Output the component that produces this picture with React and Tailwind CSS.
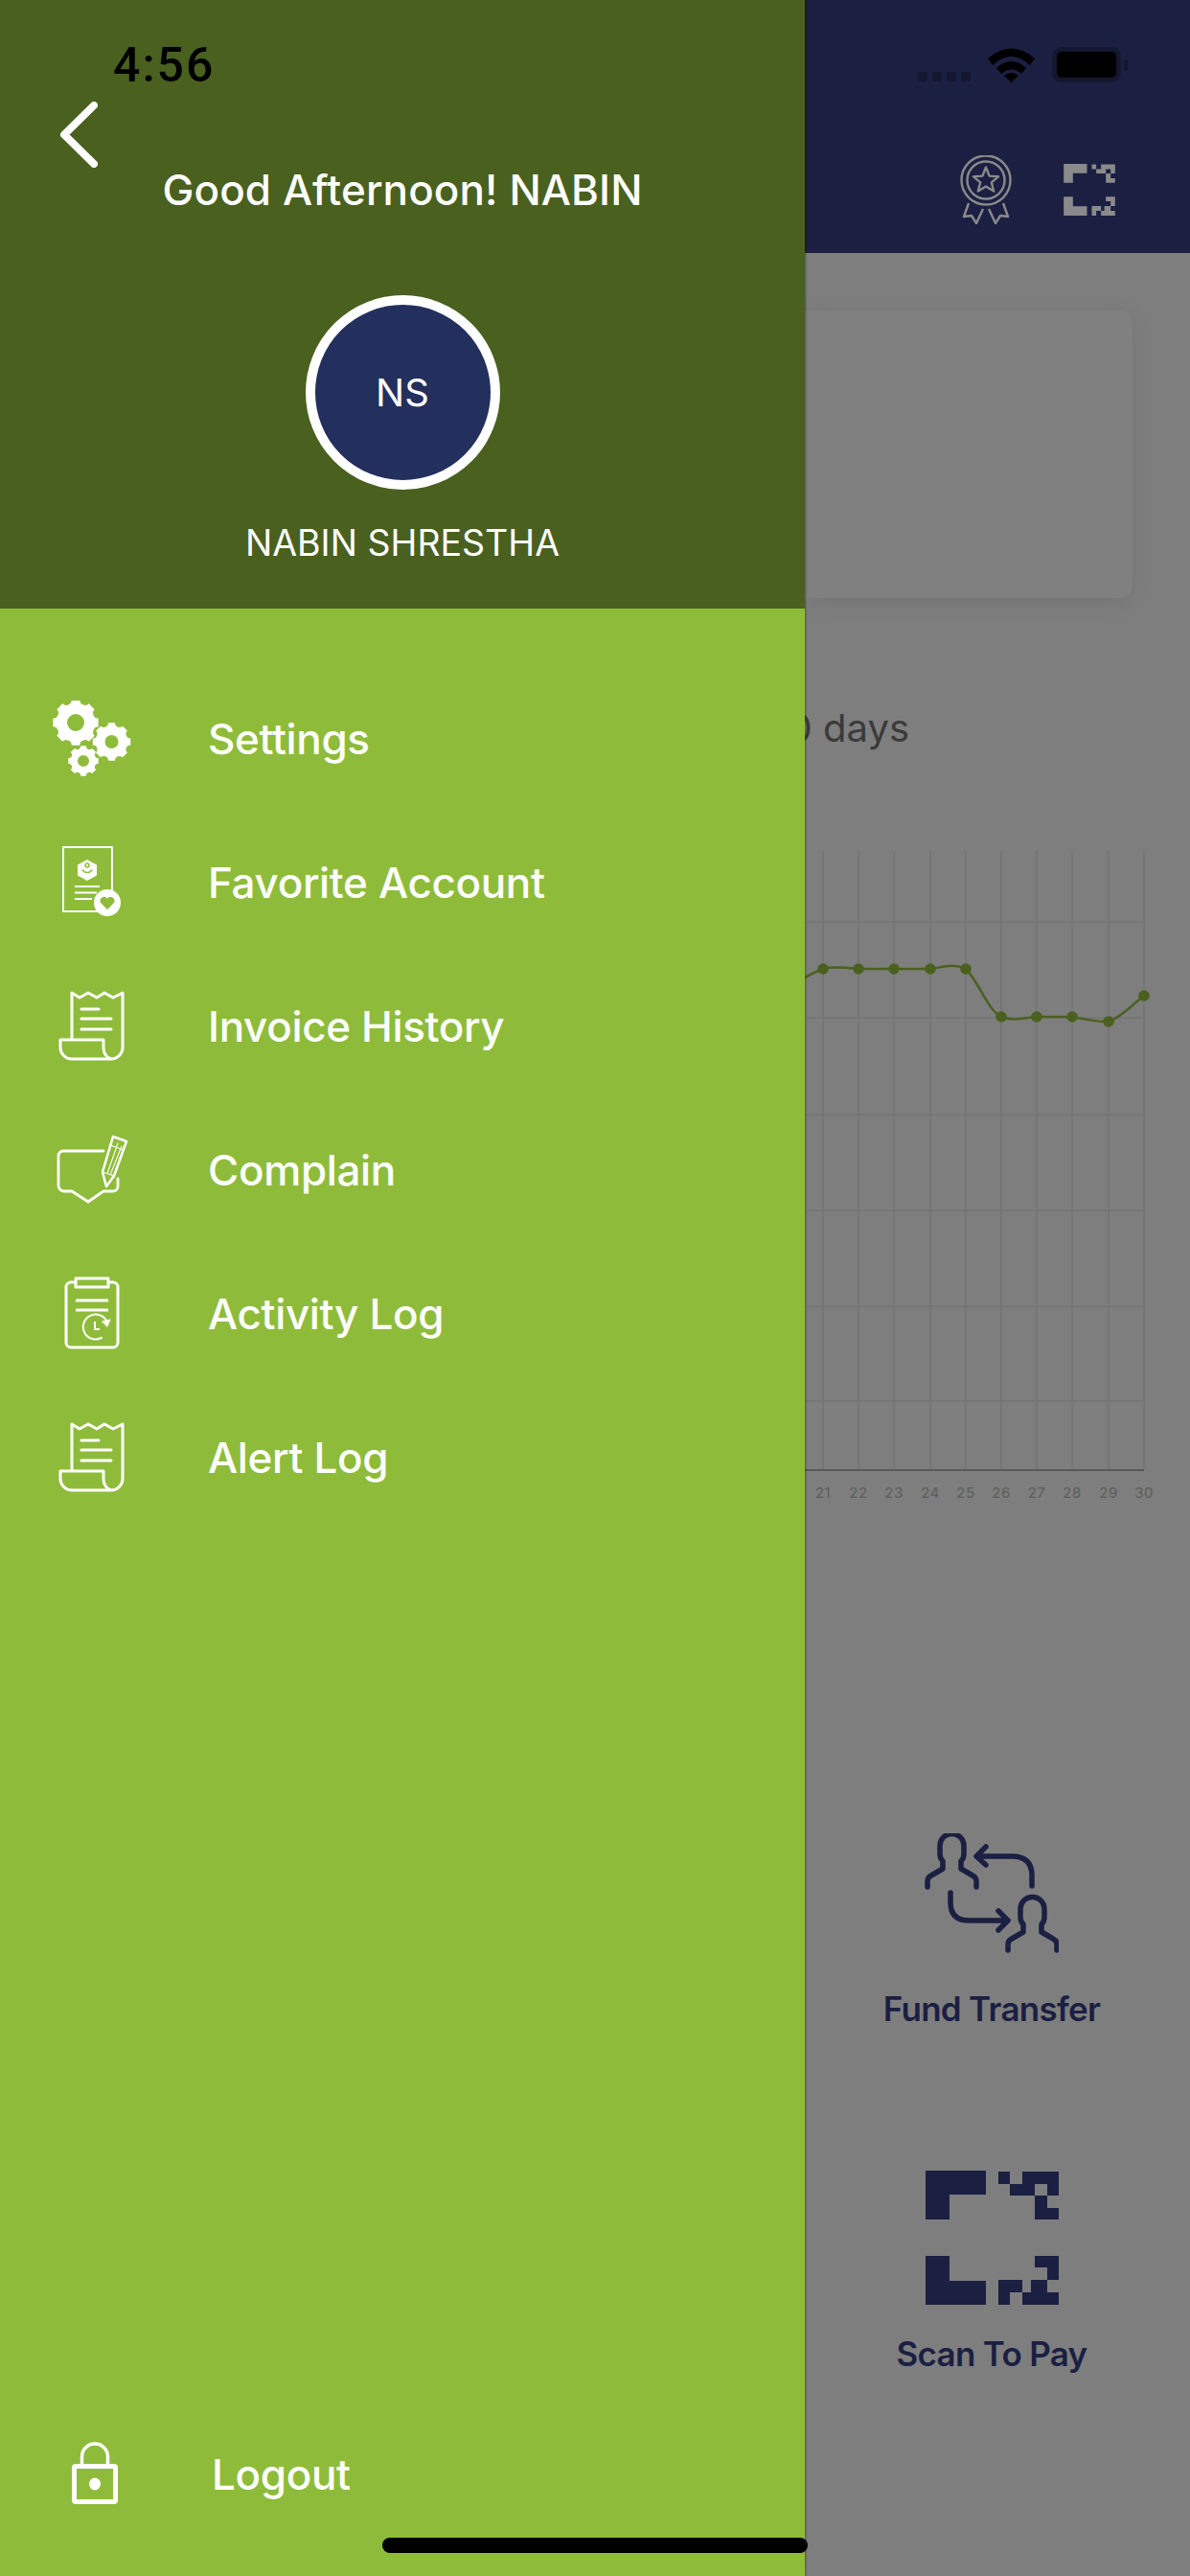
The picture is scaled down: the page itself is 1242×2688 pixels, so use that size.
/**
 * Side drawer over a dimmed dashboard
 */
const GearPath = (cx, cy, outer, inner, hole, teeth) => {
  const pts = [];
  const step = (Math.PI * 2) / teeth;
  for (let i = 0; i < teeth; i++) {
    const a = i * step - Math.PI / 2;
    [[-0.5, inner], [-0.3, inner + 1], [-0.22, outer], [0.22, outer], [0.3, inner + 1], [0.5, inner]].forEach(([k, r]) => {
      pts.push(`${(cx + Math.cos(a + k * step) * r).toFixed(2)} ${(cy + Math.sin(a + k * step) * r).toFixed(2)}`);
    });
  }
  return `M${pts.join('L')}Z M${cx - hole} ${cy}a${hole} ${hole} 0 1 0 ${hole * 2} 0a${hole} ${hole} 0 1 0 ${-hole * 2} 0Z`;
};

const Slot = ({ children }) => (
  <svg width="100" height="80" viewBox="0 0 100 80" fill="none" stroke="white" strokeLinecap="round" strokeLinejoin="round" className="ml-[46px] mr-[71px] shrink-0">
    {children}
  </svg>
);

const GearsIcon = () => (
  <Slot>
    <path d={GearPath(33, 23, 24, 20, 9, 8)} fill="white" stroke="none" fillRule="evenodd" />
    <path d={GearPath(70.5, 43, 20, 16.5, 7, 8)} fill="white" stroke="none" fillRule="evenodd" />
    <path d={GearPath(41, 63, 16, 13, 6, 8)} fill="white" stroke="none" fillRule="evenodd" />
  </Slot>
);

const FavoriteIcon = () => (
  <Slot>
    <path d="M56 70H20V3H71V48" strokeWidth="2" strokeLinecap="butt" />
    <path d="M45 16l10 5.500v11L45 38l-10-5.500v-11z" fill="white" stroke="none" />
    <path d="M40 27q5 5 10 0" stroke="#8ebc3a" strokeWidth="1.6" />
    <circle cx="45" cy="22" r="2" stroke="#8ebc3a" strokeWidth="1.4" />
    <path d="M32 44H58M32 50.500H55M32 57H50" strokeWidth="2" strokeLinecap="butt" />
    <circle cx="66" cy="61" r="14" fill="white" stroke="none" />
    <path d="M66 68l-6.500-6.500a3.800 3.800 0 0 1 6.500-5a3.800 3.800 0 0 1 6.500 5z" fill="#8ebc3a" stroke="none" />
  </Slot>
);

const ReceiptIcon = () => (
  <Slot>
    <path d="M29 54V5L37 10L46 5L55 10L63 5L72 10L82 5V62A12 12 0 0 1 70 74H29A12 12 0 0 1 17 62V54H62V62A10 12 0 0 0 70 74" strokeWidth="3" />
    <path d="M39 22H57M39 32H70M39 43H70" strokeWidth="3" />
  </Slot>
);

const ComplainIcon = () => (
  <Slot>
    <path d="M62 20H20A5 5 0 0 0 15 25V56A6 6 0 0 0 21 62H29L46 73L62 62H72A5 5 0 0 0 77 57V49" strokeWidth="2.8" />
    <path d="M72 5L86 10L73 46L65 57L61 42Z" strokeWidth="2.6" />
    <path d="M69 14L83 19M61 42L73 46M66 43.500L77 12M69 45L81 15" strokeWidth="1.1" />
  </Slot>
);

const ActivityIcon = () => (
  <Slot>
    <path d="M33 7H28A5 5 0 0 0 23 12V70A5 5 0 0 0 28 75H72A5 5 0 0 0 77 70V12A5 5 0 0 0 72 7H67" strokeWidth="3" />
    <path d="M33 3H67V12H33Z" strokeWidth="3" />
    <path d="M33 26H67M33 36H67" strokeWidth="3" strokeLinecap="butt" />
    <path d="M60 65A13 13 0 1 1 65 47" strokeWidth="2" />
    <path d="M61 48L69 46L66 53Z" fill="white" strokeWidth="1" />
    <path d="M53 48V56H58" strokeWidth="2" strokeLinecap="butt" />
  </Slot>
);

const LockIcon = () => (
  <Slot>
    <rect x="31.500" y="31.500" width="43" height="37" rx="1.500" strokeWidth="5" />
    <path d="M39.500 29V21.500A13.500 13.500 0 0 1 66.500 21.500V29" strokeWidth="3.500" strokeLinecap="butt" />
    <ellipse cx="53" cy="50" rx="6" ry="6.500" fill="white" stroke="none" />
  </Slot>
);

const ScanIcon = ({ width, height, color }) => (
  <svg width={width} height={height} viewBox="0 0 139 140" fill={color} className="shrink-0">
    <path d="M0 0H63V25H25V51H0Z" />
    <path d="M76 1H88V14H76ZM88 14H114V26H88ZM101 1H139V26H127V14H101ZM114 26H127V39H139V51H114Z" />
    <path d="M0 89H25V115H63V140H0Z" />
    <path d="M114 89H139V114H127V101H114ZM110 114H127V127H139V140H101V127H110ZM76 114H101V127H88V140H76Z" />
  </svg>
);

const MedalIcon = () => (
  <svg width="54" height="72" viewBox="0 0 54 72" fill="none" stroke="#8a8a8a" strokeWidth="2.400" strokeLinejoin="round" className="shrink-0">
    <circle cx="27" cy="26" r="25.500" />
    <circle cx="27" cy="26" r="19.500" />
    <path d="M27 12.500L30.600 21.600L40 22.300L32.800 28.300L35.200 37.600L27 32.600L18.800 37.600L21.200 28.300L14 22.300L23.400 21.600Z" />
    <path d="M9 50L4 64L12 63L17 71L24 56M45 50L50 64L42 63L37 71L30 56" />
  </svg>
);

const PersonPath = 'M3 56V50Q3 46 7 44L19 37V29Q16 26 16 22V13A12.500 12.500 0 0 1 41 13V22Q41 26 38 29V37L50 44Q54 46 54 50V56';

const TransferIcon = () => (
  <svg width="140" height="125" viewBox="0 0 140 125" fill="none" stroke="#1b1f42" strokeWidth="5.500" strokeLinecap="round" strokeLinejoin="round" className="shrink-0">
    <path d={PersonPath} />
    <path d={PersonPath} transform="translate(84 66)" />
    <path d="M112 55V44Q112 24 91 24H54M64 14L54 24L64 33" />
    <path d="M27 62V72Q27 91 46 91H87M77 81L87 91L77 101" />
  </svg>
);

const days = [
  [19, 123, '21'], [56, 123, '22'], [93, 123, '23'], [131, 123, '24'], [168, 123, '25'],
  [205, 173, '26'], [242, 173, '27'], [279, 173, '28'], [317, 178, '29'], [354, 151, '30'],
];

const Chart = () => (
  <svg width="402" height="682" viewBox="0 0 402 682" fill="none" className="mt-[98px] shrink-0">
    {[74, 174, 275, 375, 475, 574].map((y) => (
      <path key={y} d={`M0 ${y}H354`} stroke="#747474" strokeWidth="1.500" />
    ))}
    {days.map(([x]) => (
      <path key={x} d={`M${x} 0V646`} stroke="#747474" strokeWidth="1.500" />
    ))}
    <path d="M0 646H354" stroke="#5a5a5a" strokeWidth="2" />
    <path d="M0 132C6 129 13 125 19 123C30 120 45 122 56 123L131 123C145 121 155 117 168 123C182 137 190 165 205 173C218 178 230 174 242 173L279 173C292 175 305 179 317 178C330 174 342 160 354 151" stroke="#4a601f" strokeWidth="2.500" />
    {days.map(([x, y]) => (
      <circle key={x} cx={x} cy={y} r="5.800" fill="#4a601f" />
    ))}
    {days.map(([x, , label]) => (
      <text key={label} x={x} y="675" textAnchor="middle" fill="#5c5c5c" fontSize="15" letterSpacing="0.5" fontFamily="Inter, sans-serif">{label}</text>
    ))}
  </svg>
);

const menu = [
  ['Settings', GearsIcon],
  ['Favorite Account', FavoriteIcon],
  ['Invoice History', ReceiptIcon],
  ['Complain', ComplainIcon],
  ['Activity Log', ActivityIcon],
  ['Alert Log', ReceiptIcon],
];

const App = () => {
  return (
    <div className="relative flex w-[1242px] h-[2688px] overflow-hidden font-['Inter',sans-serif] text-white">

      {/* Drawer */}
      <div className="relative z-10 flex flex-col w-[840px] shrink-0 bg-[#8ebc3a] shadow-[1px_0_2px_rgba(0,0,0,0.35)]">
        <div className="flex flex-col h-[635px] bg-[#49601f]">
          <div className="ml-[118px] mt-[44px] text-[50px] leading-[48px] font-medium text-black font-['Roboto',sans-serif] tracking-[2px]">4:56</div>
          <svg width="40" height="69" viewBox="0 0 40 69" fill="none" stroke="white" strokeWidth="8" strokeLinecap="round" strokeLinejoin="round" className="ml-[62px] mt-[14px]">
            <path d="M36 4L5 34.500L36 65" />
          </svg>
          <div className="mt-[-3px] text-center text-[44px] leading-[52px] font-medium tracking-[0.1px]">Good Afternoon! NABIN</div>
          <div className="flex items-center justify-center self-center mt-[84px] w-[203px] h-[203px] rounded-full border-[10px] border-white bg-[#232f5c] text-[40px]">NS</div>
          <div className="mt-[32px] text-center text-[37.5px] leading-[48px]">NABIN SHRESTHA</div>
        </div>

        <div className="flex-1 pt-[61px]">
          {menu.map(([label, Icon]) => (
            <div key={label} className="flex items-center h-[150px]">
              <Icon />
              <span className="text-[44px] font-medium tracking-[-0.35px]">{label}</span>
            </div>
          ))}
        </div>

        <div className="flex items-center h-[100px] mb-[56px]">
          <LockIcon />
          <span className="ml-[4px] text-[44px] font-medium tracking-[-0.35px]">Logout</span>
        </div>
      </div>

      {/* Dimmed dashboard behind the drawer */}
      <div className="flex flex-col flex-1 min-w-0 overflow-hidden bg-[#7e7e7e]">
        <div className="h-[264px] shrink-0 bg-[#1b1f42]">
          <div className="flex justify-end items-end pt-[49px] pr-[65px]">
            <div className="flex gap-[5px] mb-[1px] mr-[18px]">
              {[0, 1, 2, 3].map((i) => (
                <div key={i} className="w-[10px] h-[10px] rounded-[3px] bg-[#14172f]" />
              ))}
            </div>
            <svg width="49" height="36" viewBox="0 0 49 36" fill="black" className="mr-[18px]">
              <path d="M0 11Q24.500 -10 49 11L44 18Q24.500 0 5 18Z" />
              <path d="M9 21Q24.500 7 40 21L35 27Q24.500 18 14 27Z" />
              <path d="M17 29Q24.500 23 32 29L24.500 36Z" />
            </svg>
            <div className="flex items-center">
              <div className="w-[72px] h-[37px] rounded-[10px] border-[5px] border-[#14172f] bg-black" />
              <div className="ml-[3px] w-[4px] h-[12px] rounded-r-[3px] bg-[#14172f]" />
            </div>
          </div>
          <div className="flex justify-end items-start gap-[54px] pr-[78px] mt-[76px]">
            <MedalIcon />
            <div className="mt-[9px]">
              <ScanIcon width={54} height={54} color="#8a8a8a" />
            </div>
          </div>
        </div>

        <div className="shrink-0 mt-[60px] mr-[60px] h-[300px] rounded-r-[14px] bg-[#808080] shadow-[0_4px_24px_rgba(0,0,0,0.08)]" />

        <div className="flex justify-end shrink-0 mt-[106px] pr-[293px] text-[40px] leading-[60px] text-[#3a3a3a] whitespace-nowrap">30 days</div>

        <Chart />

        <div className="flex flex-col items-center shrink-0 mt-[343px] pr-[12px] text-[35px] leading-[40px] font-semibold tracking-[-0.7px] text-[#1b1f42] whitespace-nowrap">
          <TransferIcon />
          <span className="mt-[38px]">Fund Transfer</span>
          <div className="mt-[149px]">
            <ScanIcon width={139} height={140} color="#1b1f42" />
          </div>
          <span className="mt-[31px]">Scan To Pay</span>
        </div>
      </div>

      {/* Home indicator */}
      <div className="absolute z-20 left-[399px] top-[2648px] w-[444px] h-[16px] rounded-full bg-black" />
    </div>
  );
};

export default App;
